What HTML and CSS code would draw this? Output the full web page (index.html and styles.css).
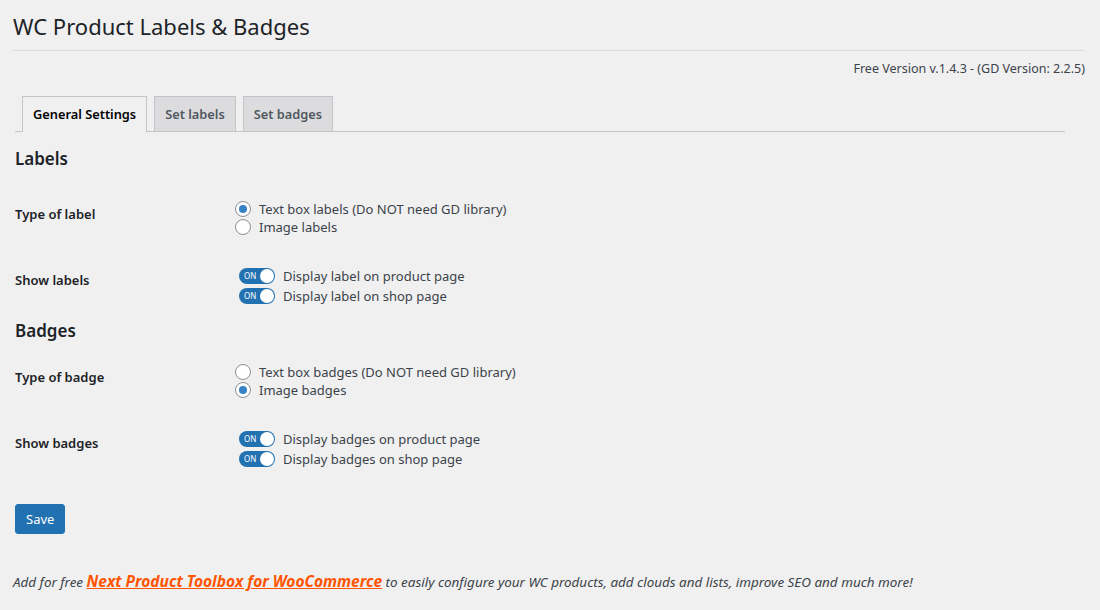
FILE: index.html
```html
<!DOCTYPE html>
<html lang="en">
<head>
<meta charset="utf-8">
<title>WC Product Labels &amp; Badges</title>
<link rel="stylesheet" href="styles.css">
</head>
<body>
<div class="wrap">
  <h1 class="title">WC Product Labels &amp; Badges</h1>
  <div class="version">Free Version v.1.4.3 - (GD Version: 2.2.5)</div>
  <nav class="tabs">
    <a class="tab tab-active">General Settings</a>
    <a class="tab">Set labels</a>
    <a class="tab">Set badges</a>
  </nav>
  <div class="content">
    <h2 class="section first">Labels</h2>
    <div class="row r1">
      <div class="label">Type of label</div>
      <div class="opts">
        <div class="opt radio-line"><span class="radio checked"></span>Text box labels (Do NOT need GD library)</div>
        <div class="opt radio-line"><span class="radio"></span>Image labels</div>
      </div>
    </div>
    <div class="row r2">
      <div class="label">Show labels</div>
      <div class="opts">
        <div class="opt toggle-line"><span class="toggle"><span class="on">ON</span><span class="knob"></span></span>Display label on product page</div>
        <div class="opt toggle-line"><span class="toggle"><span class="on">ON</span><span class="knob"></span></span>Display label on shop page</div>
      </div>
    </div>
    <h2 class="section second">Badges</h2>
    <div class="row r3">
      <div class="label">Type of badge</div>
      <div class="opts">
        <div class="opt radio-line"><span class="radio"></span>Text box badges (Do NOT need GD library)</div>
        <div class="opt radio-line"><span class="radio checked"></span>Image badges</div>
      </div>
    </div>
    <div class="row r4">
      <div class="label">Show badges</div>
      <div class="opts">
        <div class="opt toggle-line"><span class="toggle"><span class="on">ON</span><span class="knob"></span></span>Display badges on product page</div>
        <div class="opt toggle-line"><span class="toggle"><span class="on">ON</span><span class="knob"></span></span>Display badges on shop page</div>
      </div>
    </div>
    <button class="save">Save</button>
  </div>
  <p class="footer">Add for free <a class="promo">Next Product Toolbox for WooCommerce</a> to easily configure your WC products, add clouds and lists, improve SEO and much more!</p>
</div>
</body>
</html>
```

FILE: styles.css
```css
html, body {
  margin: 0;
  padding: 0;
  background: #f0f0f1;
}
body {
  font-family: "Noto Sans", "Open Sans", sans-serif;
  font-size: 13px;
  color: #3c434a;
}
.wrap {
  padding: 0 15px 0 12px;
}
.title {
  margin: 0;
  padding: 10px 0 8px 1px;
  font-size: 22px;
  line-height: 32px;
  font-weight: 400;
  color: #1d2327;
  border-bottom: 1px solid #dcdcde;
}
.version {
  margin-top: 9px;
  text-align: right;
  line-height: 18px;
  font-size: 12.5px;
  color: #3c434a;
}
.tabs {
  display: flex;
  align-items: flex-end;
  margin: 18px 20px 0 3px;
  border-bottom: 1px solid #c3c4c7;
}
.tab {
  margin-left: 7px;
  padding: 5px 10px;
  border: 1px solid #c3c4c7;
  border-bottom: none;
  background: #dcdcde;
  color: #50575e;
  font-size: 12.8px;
  font-weight: 600;
  line-height: 24px;
}
.tab-active {
  background: #f0f0f1;
  color: #000;
  margin-bottom: -1px;
  padding-bottom: 6px;
}
.content {
  padding-left: 3px;
}
.section {
  margin: 0;
  font-size: 17px;
  line-height: 22px;
  font-weight: 600;
  color: #1d2327;
}
.section.first { margin-top: 16px; }
.section.second { margin-top: 14px; }
.row {
  display: grid;
  grid-template-columns: 220px 1fr;
}
.r1 { margin-top: 30px; }
.r2 { margin-top: 30px; }
.r3 { margin-top: 21px; }
.r4 { margin-top: 30px; }
.label {
  padding-top: 4px;
  font-size: 13px;
  line-height: 20px;
  font-weight: 600;
  color: #1d2327;
}
.opt {
  display: flex;
  align-items: center;
  font-size: 13px;
  color: #3c434a;
}
.radio-line { height: 18px; }
.toggle-line { height: 20px; }
.radio {
  box-sizing: border-box;
  width: 16px;
  height: 16px;
  margin-right: 8px;
  border: 1px solid #8c8f94;
  border-radius: 50%;
  background: #fff;
  display: flex;
  align-items: center;
  justify-content: center;
}
.radio.checked::before {
  content: "";
  width: 8px;
  height: 8px;
  border-radius: 50%;
  background: #3582c4;
}
.toggle {
  position: relative;
  box-sizing: border-box;
  width: 36px;
  height: 16px;
  margin: 0 8px 0 4px;
  border-radius: 8px;
  background: #2271b1;
  display: flex;
  align-items: center;
}
.on {
  margin-left: 5px;
  font-size: 8px;
  line-height: 8px;
  color: #fff;
}
.knob {
  position: absolute;
  right: 1px;
  top: 1px;
  width: 14px;
  height: 14px;
  border-radius: 50%;
  background: #fff;
}
.save {
  display: block;
  margin-top: 35px;
  height: 30px;
  padding: 0 10px;
  border: 1px solid #2271b1;
  border-radius: 3px;
  background: #2271b1;
  color: #fff;
  font-family: inherit;
  font-size: 13px;
  line-height: 28px;
}
.footer {
  margin: 35px 0 0 1px;
  line-height: 24px;
  font-size: 13.45px;
  font-style: italic;
  color: #3c434a;
}
.promo {
  font-size: 15.5px;
  font-weight: 700;
  color: #ff5500;
  text-decoration: underline;
}
```
